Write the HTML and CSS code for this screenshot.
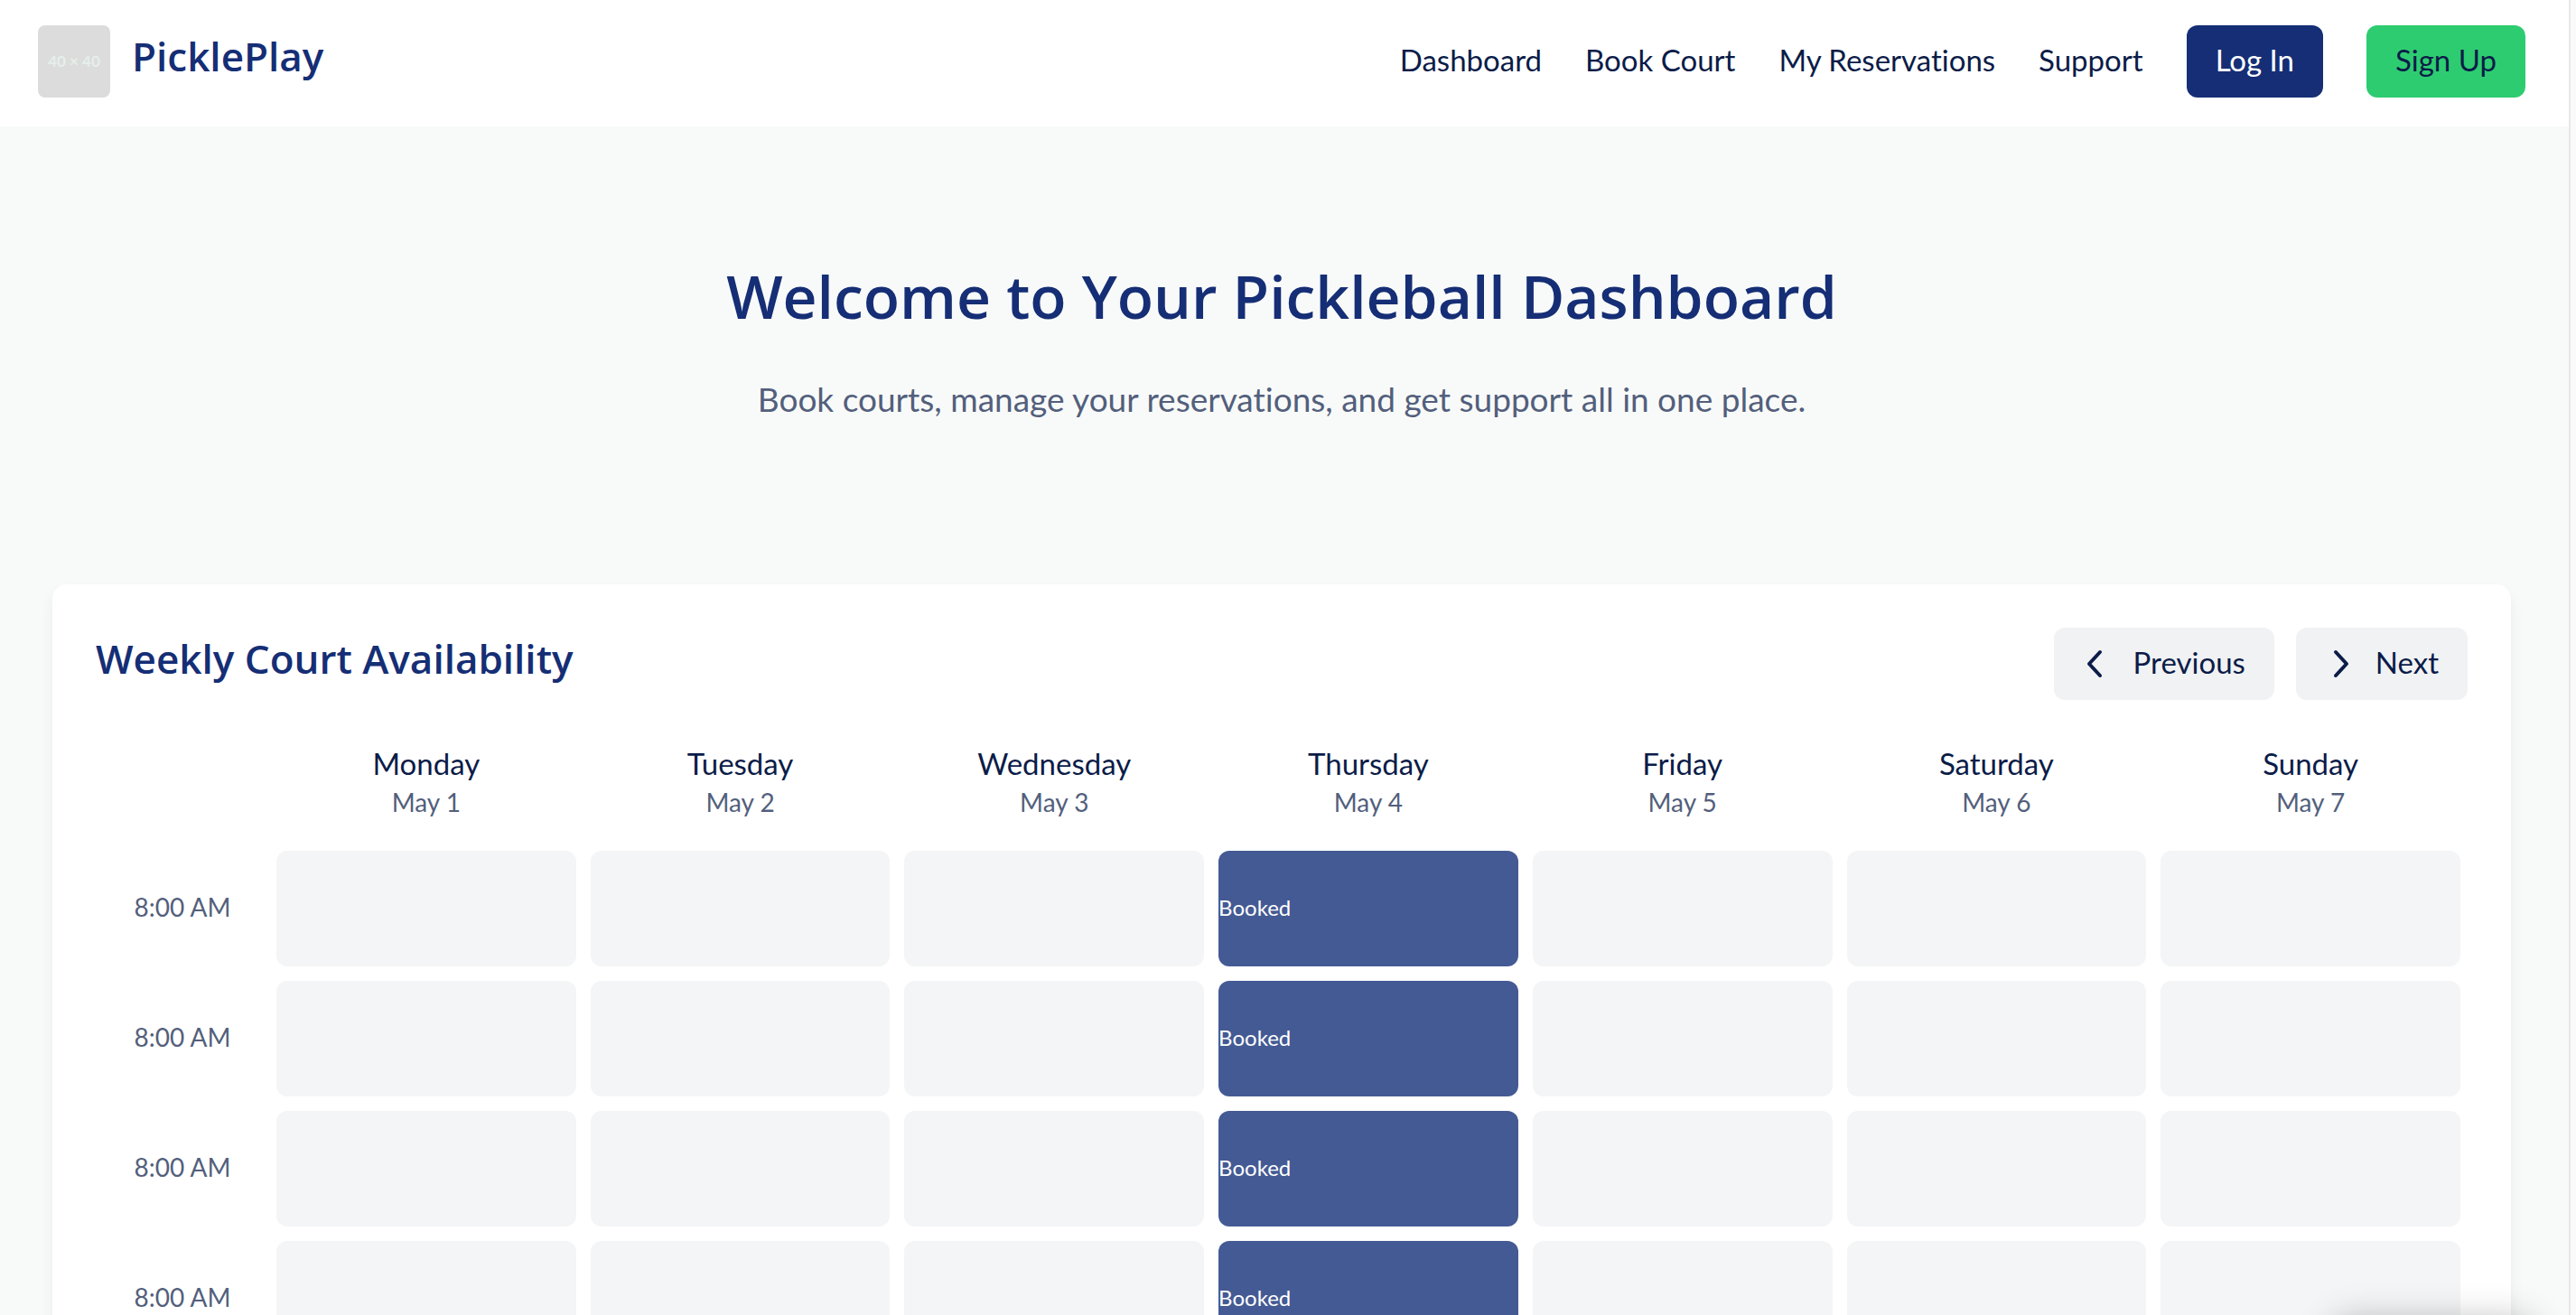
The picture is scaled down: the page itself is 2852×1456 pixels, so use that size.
FILE: index.html
```html
<!DOCTYPE html>
<html lang="en">
<head>
<meta charset="utf-8">
<meta name="viewport" content="width=device-width, initial-scale=1">
<title>PicklePlay</title>
<link rel="stylesheet" href="styles.css">
</head>
<body>
<div class="page">
  <header class="header">
    <a class="brand" href="#">
      <svg class="logo" viewBox="0 0 80 80" role="img" aria-label="Logo">
        <rect width="80" height="80" rx="8" fill="#dcdcdc"/>
        <text class="logo-text" x="40" y="46" text-anchor="middle">40 × 40</text>
      </svg>
      <span class="brand-name">PicklePlay</span>
    </a>
    <nav class="nav">
      <a href="#">Dashboard</a>
      <a href="#">Book Court</a>
      <a href="#">My Reservations</a>
      <a href="#">Support</a>
      <button class="btn btn-primary" type="button">Log In</button>
      <button class="btn btn-accent" type="button">Sign Up</button>
    </nav>
  </header>
  <main class="main">
    <section class="hero">
      <h1>Welcome to Your Pickleball Dashboard</h1>
      <p>Book courts, manage your reservations, and get support all in one place.</p>
    </section>
    <section class="card">
      <div class="card-head">
        <h2>Weekly Court Availability</h2>
        <div class="pager">
          <button class="btn btn-muted" type="button">
            <svg class="chevron" viewBox="0 0 40 40" aria-hidden="true"><path d="M19 9 7 22l12 13"/></svg>
            Previous
          </button>
          <button class="btn btn-muted" type="button">
            <svg class="chevron" viewBox="0 0 40 40" aria-hidden="true"><path d="m12 9 12 13-12 13"/></svg>
            Next
          </button>
        </div>
      </div>
      <table class="schedule">
        <thead>
          <tr>
            <td class="time"></td>
            <th scope="col">Monday<span>May 1</span></th>
            <th scope="col">Tuesday<span>May 2</span></th>
            <th scope="col">Wednesday<span>May 3</span></th>
            <th scope="col">Thursday<span>May 4</span></th>
            <th scope="col">Friday<span>May 5</span></th>
            <th scope="col">Saturday<span>May 6</span></th>
            <th scope="col">Sunday<span>May 7</span></th>
          </tr>
        </thead>
        <tbody>
          <tr>
            <th class="time" scope="row">8:00 AM</th>
            <td><div class="slot"></div></td><td><div class="slot"></div></td><td><div class="slot"></div></td>
            <td><div class="slot booked">Booked</div></td>
            <td><div class="slot"></div></td><td><div class="slot"></div></td><td><div class="slot"></div></td>
          </tr>
          <tr>
            <th class="time" scope="row">8:00 AM</th>
            <td><div class="slot"></div></td><td><div class="slot"></div></td><td><div class="slot"></div></td>
            <td><div class="slot booked">Booked</div></td>
            <td><div class="slot"></div></td><td><div class="slot"></div></td><td><div class="slot"></div></td>
          </tr>
          <tr>
            <th class="time" scope="row">8:00 AM</th>
            <td><div class="slot"></div></td><td><div class="slot"></div></td><td><div class="slot"></div></td>
            <td><div class="slot booked">Booked</div></td>
            <td><div class="slot"></div></td><td><div class="slot"></div></td><td><div class="slot"></div></td>
          </tr>
          <tr>
            <th class="time" scope="row">8:00 AM</th>
            <td><div class="slot"></div></td><td><div class="slot"></div></td><td><div class="slot"></div></td>
            <td><div class="slot booked">Booked</div></td>
            <td><div class="slot"></div></td><td><div class="slot"></div></td><td><div class="slot"></div></td>
          </tr>
        </tbody>
      </table>
    </section>
  </main>
  <div class="widget"></div>
</div>
</body>
</html>
```

FILE: styles.css
```css
* { box-sizing: border-box; }

html { background: #fafafa; }

body {
  margin: 0;
  font-family: "Lato", "Noto Sans", sans-serif;
  font-variant-ligatures: none;
  font-size: 33px;
  color: #0b1c48;
}

.page {
  height: 100vh;
  margin-right: 6px;
  overflow: hidden;
  border-right: 2px solid #e8e8e8;
  background: #f8faf9;
}

h1, h2, .brand-name {
  margin: 0;
  font-family: "Open Sans", "Noto Sans", sans-serif;
  font-weight: 600;
  color: #152e75;
}

/* Header */

.header {
  display: flex;
  justify-content: space-between;
  align-items: flex-start;
  padding: 28px 48px 32px 42px;
  background: #fff;
}

.brand {
  display: flex;
  gap: 24px;
  text-decoration: none;
}

.logo { width: 80px; height: 80px; }

.logo-text {
  font: bold 17px "Lato", sans-serif;
  fill: #e6efeb;
}

.brand-name, h2 {
  font-size: 44px;
  line-height: 68px;
}

.nav {
  display: flex;
  align-items: center;
  gap: 48px;
}

.nav a {
  padding-bottom: 4px;
  color: inherit;
  text-decoration: none;
}

.btn {
  display: flex;
  align-items: center;
  height: 80px;
  padding: 0 32px 4px;
  border: 0;
  border-radius: 12px;
  font: inherit;
  color: inherit;
  white-space: nowrap;
}

.btn-primary { background: #152e75; color: #fff; }
.btn-accent { background: #2ecc70; }
.btn-muted { gap: 16px; background: #f1f2f4; }

.chevron {
  width: 40px;
  height: 40px;
  fill: none;
  stroke: currentColor;
  stroke-width: 4;
  stroke-linecap: round;
  stroke-linejoin: round;
}

/* Main */

.main { padding: 0 64px 0 58px; }

.hero {
  padding: 136px 0 175px;
  text-align: center;
}

h1 {
  font-size: 66px;
  line-height: 102px;
}

.hero p {
  margin: 34px 0 0;
  font-size: 37px;
  line-height: 60px;
  color: #535f7c;
}

.card {
  padding: 48px;
  border-radius: 16px;
  background: #fff;
  box-shadow: 0 8px 16px rgba(0, 0, 0, 0.06);
}

.card-head {
  display: flex;
  justify-content: space-between;
  align-items: flex-start;
  margin-bottom: 48px;
}

.pager {
  display: flex;
  gap: 24px;
}

/* Schedule */

.schedule {
  width: 100%;
  table-layout: fixed;
  border-collapse: collapse;
}

.schedule th { font-weight: 400; }

.schedule thead th {
  height: 111px;
  padding: 0;
  vertical-align: top;
  line-height: 44px;
}

.schedule thead span {
  display: block;
  font-size: 28px;
  line-height: 42px;
  color: #535f7c;
}

.schedule td { padding: 8px; }

.schedule .time {
  width: 192px;
  padding: 0 0 4px;
  font-size: 28px;
  color: #535f7c;
}

.slot {
  display: flex;
  align-items: center;
  height: 128px;
  padding-bottom: 4px;
  border-radius: 12px;
  background: #f4f5f7;
  font-size: 24px;
}

.booked {
  background: #445a94;
  color: #fff;
}

/* Chat widget, parked below the window edge; only its shadow shows */

.widget {
  position: fixed;
  right: 48px;
  top: 100%;
  width: 220px;
  height: 80px;
  border-radius: 12px;
  box-shadow: 0 8px 40px rgba(0, 0, 0, 0.3);
}
```
